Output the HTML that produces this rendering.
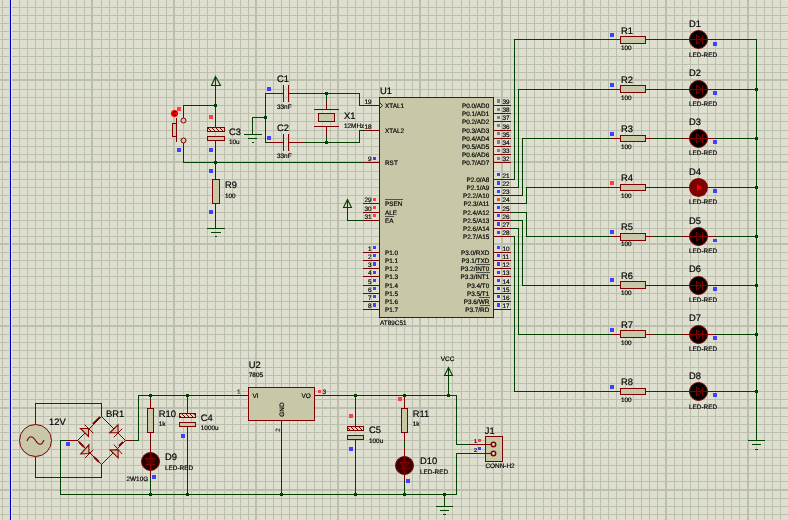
<!DOCTYPE html>
<html><head><meta charset="utf-8"><style>html,body{margin:0;padding:0;background:#dfdfd0;overflow:hidden}svg{display:block}</style></head>
<body><svg width="788" height="520" viewBox="0 0 788 520"><defs><pattern id="hatch" x="0" y="0" width="4" height="4" patternUnits="userSpaceOnUse">
<rect width="4" height="4" fill="#d8d8b8"/><rect x="0" y="0" width="1" height="1" fill="#800000"/><rect x="1" y="1" width="1" height="1" fill="#800000"/><rect x="2" y="2" width="1" height="1" fill="#800000"/><rect x="3" y="3" width="1" height="1" fill="#800000"/></pattern></defs><rect width="788" height="520" fill="#dfdfd0"/><g fill="#bdbfae" shape-rendering="crispEdges"><rect x="2" y="0" width="1" height="520"/><rect x="9" y="0" width="2" height="520"/><rect x="19" y="0" width="1" height="520"/><rect x="27" y="0" width="1" height="520"/><rect x="35" y="0" width="1" height="520"/><rect x="43" y="0" width="1" height="520"/><rect x="51" y="0" width="1" height="520"/><rect x="60" y="0" width="1" height="520"/><rect x="68" y="0" width="1" height="520"/><rect x="76" y="0" width="1" height="520"/><rect x="84" y="0" width="1" height="520"/><rect x="91" y="0" width="2" height="520"/><rect x="101" y="0" width="1" height="520"/><rect x="109" y="0" width="1" height="520"/><rect x="117" y="0" width="1" height="520"/><rect x="125" y="0" width="1" height="520"/><rect x="133" y="0" width="1" height="520"/><rect x="142" y="0" width="1" height="520"/><rect x="150" y="0" width="1" height="520"/><rect x="158" y="0" width="1" height="520"/><rect x="166" y="0" width="1" height="520"/><rect x="173" y="0" width="2" height="520"/><rect x="183" y="0" width="1" height="520"/><rect x="191" y="0" width="1" height="520"/><rect x="199" y="0" width="1" height="520"/><rect x="207" y="0" width="1" height="520"/><rect x="215" y="0" width="1" height="520"/><rect x="224" y="0" width="1" height="520"/><rect x="232" y="0" width="1" height="520"/><rect x="240" y="0" width="1" height="520"/><rect x="248" y="0" width="1" height="520"/><rect x="255" y="0" width="2" height="520"/><rect x="265" y="0" width="1" height="520"/><rect x="273" y="0" width="1" height="520"/><rect x="281" y="0" width="1" height="520"/><rect x="289" y="0" width="1" height="520"/><rect x="297" y="0" width="1" height="520"/><rect x="306" y="0" width="1" height="520"/><rect x="314" y="0" width="1" height="520"/><rect x="322" y="0" width="1" height="520"/><rect x="330" y="0" width="1" height="520"/><rect x="337" y="0" width="2" height="520"/><rect x="347" y="0" width="1" height="520"/><rect x="355" y="0" width="1" height="520"/><rect x="363" y="0" width="1" height="520"/><rect x="371" y="0" width="1" height="520"/><rect x="379" y="0" width="1" height="520"/><rect x="388" y="0" width="1" height="520"/><rect x="396" y="0" width="1" height="520"/><rect x="404" y="0" width="1" height="520"/><rect x="412" y="0" width="1" height="520"/><rect x="419" y="0" width="2" height="520"/><rect x="428" y="0" width="1" height="520"/><rect x="436" y="0" width="1" height="520"/><rect x="444" y="0" width="1" height="520"/><rect x="452" y="0" width="1" height="520"/><rect x="461" y="0" width="1" height="520"/><rect x="469" y="0" width="1" height="520"/><rect x="477" y="0" width="1" height="520"/><rect x="485" y="0" width="1" height="520"/><rect x="493" y="0" width="1" height="520"/><rect x="501" y="0" width="2" height="520"/><rect x="510" y="0" width="1" height="520"/><rect x="518" y="0" width="1" height="520"/><rect x="526" y="0" width="1" height="520"/><rect x="534" y="0" width="1" height="520"/><rect x="543" y="0" width="1" height="520"/><rect x="551" y="0" width="1" height="520"/><rect x="559" y="0" width="1" height="520"/><rect x="567" y="0" width="1" height="520"/><rect x="575" y="0" width="1" height="520"/><rect x="583" y="0" width="2" height="520"/><rect x="592" y="0" width="1" height="520"/><rect x="600" y="0" width="1" height="520"/><rect x="608" y="0" width="1" height="520"/><rect x="616" y="0" width="1" height="520"/><rect x="625" y="0" width="1" height="520"/><rect x="633" y="0" width="1" height="520"/><rect x="641" y="0" width="1" height="520"/><rect x="649" y="0" width="1" height="520"/><rect x="657" y="0" width="1" height="520"/><rect x="665" y="0" width="2" height="520"/><rect x="674" y="0" width="1" height="520"/><rect x="682" y="0" width="1" height="520"/><rect x="690" y="0" width="1" height="520"/><rect x="698" y="0" width="1" height="520"/><rect x="707" y="0" width="1" height="520"/><rect x="715" y="0" width="1" height="520"/><rect x="723" y="0" width="1" height="520"/><rect x="731" y="0" width="1" height="520"/><rect x="739" y="0" width="1" height="520"/><rect x="747" y="0" width="2" height="520"/><rect x="756" y="0" width="1" height="520"/><rect x="764" y="0" width="1" height="520"/><rect x="772" y="0" width="1" height="520"/><rect x="780" y="0" width="1" height="520"/><rect x="789" y="0" width="1" height="520"/><rect x="0" y="-3" width="788" height="2"/><rect x="0" y="7" width="788" height="1"/><rect x="0" y="15" width="788" height="1"/><rect x="0" y="23" width="788" height="1"/><rect x="0" y="31" width="788" height="1"/><rect x="0" y="39" width="788" height="1"/><rect x="0" y="48" width="788" height="1"/><rect x="0" y="56" width="788" height="1"/><rect x="0" y="64" width="788" height="1"/><rect x="0" y="72" width="788" height="1"/><rect x="0" y="79" width="788" height="2"/><rect x="0" y="89" width="788" height="1"/><rect x="0" y="97" width="788" height="1"/><rect x="0" y="105" width="788" height="1"/><rect x="0" y="113" width="788" height="1"/><rect x="0" y="121" width="788" height="1"/><rect x="0" y="130" width="788" height="1"/><rect x="0" y="138" width="788" height="1"/><rect x="0" y="146" width="788" height="1"/><rect x="0" y="154" width="788" height="1"/><rect x="0" y="161" width="788" height="2"/><rect x="0" y="171" width="788" height="1"/><rect x="0" y="179" width="788" height="1"/><rect x="0" y="187" width="788" height="1"/><rect x="0" y="195" width="788" height="1"/><rect x="0" y="203" width="788" height="1"/><rect x="0" y="212" width="788" height="1"/><rect x="0" y="220" width="788" height="1"/><rect x="0" y="228" width="788" height="1"/><rect x="0" y="236" width="788" height="1"/><rect x="0" y="243" width="788" height="2"/><rect x="0" y="252" width="788" height="1"/><rect x="0" y="260" width="788" height="1"/><rect x="0" y="268" width="788" height="1"/><rect x="0" y="276" width="788" height="1"/><rect x="0" y="285" width="788" height="1"/><rect x="0" y="293" width="788" height="1"/><rect x="0" y="301" width="788" height="1"/><rect x="0" y="309" width="788" height="1"/><rect x="0" y="317" width="788" height="1"/><rect x="0" y="325" width="788" height="2"/><rect x="0" y="334" width="788" height="1"/><rect x="0" y="342" width="788" height="1"/><rect x="0" y="350" width="788" height="1"/><rect x="0" y="358" width="788" height="1"/><rect x="0" y="367" width="788" height="1"/><rect x="0" y="375" width="788" height="1"/><rect x="0" y="383" width="788" height="1"/><rect x="0" y="391" width="788" height="1"/><rect x="0" y="399" width="788" height="1"/><rect x="0" y="407" width="788" height="2"/><rect x="0" y="416" width="788" height="1"/><rect x="0" y="424" width="788" height="1"/><rect x="0" y="432" width="788" height="1"/><rect x="0" y="440" width="788" height="1"/><rect x="0" y="449" width="788" height="1"/><rect x="0" y="457" width="788" height="1"/><rect x="0" y="465" width="788" height="1"/><rect x="0" y="473" width="788" height="1"/><rect x="0" y="481" width="788" height="1"/><rect x="0" y="489" width="788" height="2"/><rect x="0" y="498" width="788" height="1"/><rect x="0" y="506" width="788" height="1"/><rect x="0" y="514" width="788" height="1"/></g><rect x="9" y="0" width="1" height="520" fill="#d4d4b4"/><rect x="11" y="0" width="1" height="520" fill="#ececc8"/><rect x="10" y="0" width="1" height="520" fill="#0000c8"/><g shape-rendering="crispEdges"><rect x="215" y="86" width="1" height="32" fill="#004000"/><rect x="183" y="105" width="33" height="1" fill="#004000"/><rect x="183" y="105" width="1" height="5" fill="#004000"/><rect x="183" y="109" width="1" height="9" fill="#800000"/><rect x="183" y="143" width="1" height="8" fill="#800000"/><rect x="183" y="151" width="1" height="12" fill="#004000"/><rect x="176" y="118" width="1" height="24" fill="#800000"/><rect x="172.5" y="123.5" width="4" height="13" fill="#c8c8a8" stroke="#800000" stroke-width="1"/><rect x="177" y="107" width="4" height="4" fill="#ff4040"/><rect x="177" y="148" width="4" height="4" fill="#4040ff"/><rect x="215" y="118" width="1" height="9" fill="#800000"/><rect x="207.5" y="127.5" width="17" height="4" fill="url(#hatch)" stroke="#800000" stroke-width="1"/><rect x="207.5" y="136.5" width="17" height="4" fill="#c8c8a8" stroke="#800000" stroke-width="1"/><rect x="215" y="141" width="1" height="10" fill="#800000"/><rect x="215" y="151" width="1" height="12" fill="#004000"/><rect x="209" y="115" width="4" height="4" fill="#ff4040"/><rect x="209" y="148" width="4" height="4" fill="#4040ff"/><rect x="183" y="162" width="180" height="1" fill="#004000"/><rect x="363" y="162" width="16" height="1" fill="#800000"/><rect x="215" y="162" width="1" height="9" fill="#004000"/><rect x="215" y="171" width="1" height="8" fill="#800000"/><rect x="212.5" y="179.5" width="7" height="24" fill="#c8c8a8" stroke="#800000" stroke-width="1"/><rect x="215" y="204" width="1" height="8" fill="#800000"/><rect x="215" y="212" width="1" height="17" fill="#004000"/><rect x="207" y="228" width="18" height="1" fill="#004000"/><rect x="211" y="232" width="10" height="1" fill="#004000"/><rect x="215" y="236" width="2" height="1" fill="#004000"/><rect x="209" y="169" width="4" height="4" fill="#4040ff"/><rect x="209" y="210" width="4" height="4" fill="#4040ff"/><rect x="252" y="117" width="1" height="18" fill="#004000"/><rect x="252" y="117" width="14" height="1" fill="#004000"/><rect x="244" y="134" width="18" height="1" fill="#004000"/><rect x="248" y="138" width="9" height="1" fill="#004000"/><rect x="252" y="142" width="2" height="1" fill="#004000"/><rect x="265" y="93" width="1" height="50" fill="#004000"/><rect x="265" y="93" width="4" height="1" fill="#004000"/><rect x="269" y="93" width="15" height="1" fill="#800000"/><rect x="283" y="85" width="1" height="17" fill="#800000"/><rect x="288" y="85" width="1" height="17" fill="#800000"/><rect x="289" y="93" width="14" height="1" fill="#800000"/><rect x="303" y="93" width="57" height="1" fill="#004000"/><rect x="267" y="87" width="4" height="4" fill="#4040ff"/><rect x="265" y="142" width="4" height="1" fill="#004000"/><rect x="269" y="142" width="15" height="1" fill="#800000"/><rect x="283" y="134" width="1" height="17" fill="#800000"/><rect x="288" y="134" width="1" height="17" fill="#800000"/><rect x="289" y="142" width="14" height="1" fill="#800000"/><rect x="303" y="142" width="57" height="1" fill="#004000"/><rect x="267" y="136" width="4" height="4" fill="#4040ff"/><rect x="359" y="93" width="1" height="13" fill="#004000"/><rect x="359" y="105" width="4" height="1" fill="#004000"/><rect x="363" y="105" width="16" height="1" fill="#800000"/><rect x="359" y="130" width="1" height="13" fill="#004000"/><rect x="359" y="130" width="4" height="1" fill="#004000"/><rect x="363" y="130" width="16" height="1" fill="#800000"/><rect x="326" y="94" width="1" height="7" fill="#004000"/><rect x="326" y="101" width="1" height="8" fill="#800000"/><rect x="314" y="109" width="25" height="1" fill="#800000"/><rect x="318.5" y="113.5" width="16" height="8" fill="#c8c8a8" stroke="#800000" stroke-width="1"/><rect x="314" y="126" width="25" height="1" fill="#800000"/><rect x="326" y="127" width="1" height="9" fill="#800000"/><rect x="326" y="135" width="1" height="8" fill="#004000"/><rect x="379.5" y="97.5" width="114" height="220" fill="#c8c8a8" stroke="#800000" stroke-width="1"/><rect x="373" y="157" width="3" height="3" fill="#4040ff"/><rect x="363" y="203" width="16" height="1" fill="#800000"/><rect x="373" y="198" width="3" height="3" fill="#ff4040"/><rect x="363" y="212" width="16" height="1" fill="#800000"/><rect x="373" y="206" width="3" height="3" fill="#ff4040"/><rect x="373" y="214" width="3" height="3" fill="#ff4040"/><rect x="363" y="252" width="16" height="1" fill="#800000"/><rect x="373" y="246" width="3" height="3" fill="#4040ff"/><rect x="363" y="260" width="16" height="1" fill="#800000"/><rect x="373" y="254" width="3" height="3" fill="#4040ff"/><rect x="363" y="268" width="16" height="1" fill="#800000"/><rect x="373" y="262" width="3" height="4" fill="#4040ff"/><rect x="363" y="276" width="16" height="1" fill="#800000"/><rect x="373" y="271" width="3" height="3" fill="#4040ff"/><rect x="363" y="285" width="16" height="1" fill="#800000"/><rect x="373" y="279" width="3" height="3" fill="#4040ff"/><rect x="363" y="293" width="16" height="1" fill="#800000"/><rect x="373" y="287" width="3" height="3" fill="#4040ff"/><rect x="363" y="301" width="16" height="1" fill="#800000"/><rect x="373" y="295" width="3" height="3" fill="#4040ff"/><rect x="363" y="309" width="16" height="1" fill="#800000"/><rect x="373" y="303" width="3" height="4" fill="#4040ff"/><rect x="363" y="220" width="16" height="1" fill="#800000"/><rect x="385" y="199" width="18" height="1" fill="#505050"/><rect x="385" y="216" width="9" height="1" fill="#505050"/><rect x="476" y="264" width="14" height="1" fill="#505050"/><rect x="476" y="272" width="14" height="1" fill="#505050"/><rect x="479" y="297" width="11" height="1" fill="#505050"/><rect x="480" y="305" width="10" height="1" fill="#505050"/><rect x="347" y="207" width="1" height="14" fill="#004000"/><rect x="347" y="220" width="16" height="1" fill="#004000"/><rect x="494" y="105" width="17" height="1" fill="#800000"/><rect x="497" y="99" width="3" height="4" fill="#808080"/><rect x="494" y="113" width="17" height="1" fill="#800000"/><rect x="497" y="108" width="3" height="3" fill="#808080"/><rect x="494" y="121" width="17" height="1" fill="#800000"/><rect x="497" y="116" width="3" height="3" fill="#808080"/><rect x="494" y="130" width="17" height="1" fill="#800000"/><rect x="497" y="124" width="3" height="3" fill="#808080"/><rect x="494" y="138" width="17" height="1" fill="#800000"/><rect x="497" y="132" width="3" height="3" fill="#808080"/><rect x="494" y="146" width="17" height="1" fill="#800000"/><rect x="497" y="140" width="3" height="4" fill="#808080"/><rect x="494" y="154" width="17" height="1" fill="#800000"/><rect x="497" y="149" width="3" height="3" fill="#808080"/><rect x="494" y="162" width="17" height="1" fill="#800000"/><rect x="497" y="157" width="3" height="3" fill="#808080"/><rect x="494" y="179" width="17" height="1" fill="#800000"/><rect x="497" y="173" width="3" height="3" fill="#4040ff"/><rect x="494" y="187" width="17" height="1" fill="#800000"/><rect x="497" y="181" width="3" height="4" fill="#4040ff"/><rect x="494" y="195" width="17" height="1" fill="#800000"/><rect x="497" y="190" width="3" height="3" fill="#4040ff"/><rect x="494" y="203" width="17" height="1" fill="#800000"/><rect x="497" y="198" width="3" height="3" fill="#ff4040"/><rect x="494" y="212" width="17" height="1" fill="#800000"/><rect x="497" y="206" width="3" height="3" fill="#4040ff"/><rect x="494" y="220" width="17" height="1" fill="#800000"/><rect x="497" y="214" width="3" height="3" fill="#4040ff"/><rect x="494" y="228" width="17" height="1" fill="#800000"/><rect x="497" y="222" width="3" height="4" fill="#4040ff"/><rect x="494" y="236" width="17" height="1" fill="#800000"/><rect x="497" y="231" width="3" height="3" fill="#4040ff"/><rect x="494" y="252" width="17" height="1" fill="#800000"/><rect x="497" y="246" width="3" height="3" fill="#4040ff"/><rect x="494" y="260" width="17" height="1" fill="#800000"/><rect x="497" y="254" width="3" height="3" fill="#4040ff"/><rect x="494" y="268" width="17" height="1" fill="#800000"/><rect x="497" y="262" width="3" height="4" fill="#4040ff"/><rect x="494" y="276" width="17" height="1" fill="#800000"/><rect x="497" y="271" width="3" height="3" fill="#4040ff"/><rect x="494" y="285" width="17" height="1" fill="#800000"/><rect x="497" y="279" width="3" height="3" fill="#4040ff"/><rect x="494" y="293" width="17" height="1" fill="#800000"/><rect x="497" y="287" width="3" height="3" fill="#4040ff"/><rect x="494" y="301" width="17" height="1" fill="#800000"/><rect x="497" y="295" width="3" height="3" fill="#4040ff"/><rect x="494" y="309" width="17" height="1" fill="#800000"/><rect x="497" y="303" width="3" height="4" fill="#4040ff"/><rect x="511" y="179" width="4" height="1" fill="#004000"/><rect x="514" y="39" width="1" height="141" fill="#004000"/><rect x="514" y="39" width="98" height="1" fill="#004000"/><rect x="612" y="39" width="8" height="1" fill="#800000"/><rect x="620.5" y="36.5" width="25" height="7" fill="#c8c8a8" stroke="#800000" stroke-width="1"/><rect x="646" y="39" width="8" height="1" fill="#800000"/><rect x="654" y="39" width="28" height="1" fill="#004000"/><rect x="682" y="39" width="7" height="1" fill="#800000"/><rect x="708" y="39" width="8" height="1" fill="#800000"/><rect x="716" y="39" width="41" height="1" fill="#004000"/><rect x="610" y="33" width="4" height="4" fill="#4040ff"/><rect x="713" y="42" width="4" height="4" fill="#4040ff"/><rect x="511" y="187" width="8" height="1" fill="#004000"/><rect x="518" y="89" width="1" height="99" fill="#004000"/><rect x="518" y="89" width="94" height="1" fill="#004000"/><rect x="612" y="89" width="8" height="1" fill="#800000"/><rect x="620.5" y="85.5" width="25" height="7" fill="#c8c8a8" stroke="#800000" stroke-width="1"/><rect x="646" y="89" width="8" height="1" fill="#800000"/><rect x="654" y="89" width="28" height="1" fill="#004000"/><rect x="682" y="89" width="7" height="1" fill="#800000"/><rect x="708" y="89" width="8" height="1" fill="#800000"/><rect x="716" y="89" width="41" height="1" fill="#004000"/><rect x="610" y="83" width="4" height="4" fill="#4040ff"/><rect x="713" y="91" width="4" height="4" fill="#4040ff"/><rect x="511" y="195" width="12" height="1" fill="#004000"/><rect x="522" y="138" width="1" height="58" fill="#004000"/><rect x="522" y="138" width="90" height="1" fill="#004000"/><rect x="612" y="138" width="8" height="1" fill="#800000"/><rect x="620.5" y="135.5" width="25" height="6" fill="#c8c8a8" stroke="#800000" stroke-width="1"/><rect x="646" y="138" width="8" height="1" fill="#800000"/><rect x="654" y="138" width="28" height="1" fill="#004000"/><rect x="682" y="138" width="7" height="1" fill="#800000"/><rect x="708" y="138" width="8" height="1" fill="#800000"/><rect x="716" y="138" width="41" height="1" fill="#004000"/><rect x="610" y="132" width="4" height="4" fill="#4040ff"/><rect x="713" y="140" width="4" height="4" fill="#4040ff"/><rect x="511" y="203" width="16" height="1" fill="#004000"/><rect x="526" y="187" width="1" height="17" fill="#004000"/><rect x="526" y="187" width="86" height="1" fill="#004000"/><rect x="612" y="187" width="8" height="1" fill="#800000"/><rect x="620.5" y="184.5" width="25" height="6" fill="#c8c8a8" stroke="#800000" stroke-width="1"/><rect x="646" y="187" width="8" height="1" fill="#800000"/><rect x="654" y="187" width="28" height="1" fill="#004000"/><rect x="682" y="187" width="7" height="1" fill="#800000"/><rect x="708" y="187" width="8" height="1" fill="#800000"/><rect x="716" y="187" width="41" height="1" fill="#004000"/><rect x="610" y="181" width="4" height="4" fill="#ff4040"/><rect x="713" y="189" width="4" height="4" fill="#4040ff"/><rect x="511" y="212" width="16" height="1" fill="#004000"/><rect x="526" y="212" width="1" height="25" fill="#004000"/><rect x="526" y="236" width="86" height="1" fill="#004000"/><rect x="612" y="236" width="8" height="1" fill="#800000"/><rect x="620.5" y="233.5" width="25" height="7" fill="#c8c8a8" stroke="#800000" stroke-width="1"/><rect x="646" y="236" width="8" height="1" fill="#800000"/><rect x="654" y="236" width="28" height="1" fill="#004000"/><rect x="682" y="236" width="7" height="1" fill="#800000"/><rect x="708" y="236" width="8" height="1" fill="#800000"/><rect x="716" y="236" width="41" height="1" fill="#004000"/><rect x="610" y="230" width="4" height="4" fill="#4040ff"/><rect x="713" y="239" width="4" height="3" fill="#4040ff"/><rect x="511" y="220" width="12" height="1" fill="#004000"/><rect x="522" y="220" width="1" height="66" fill="#004000"/><rect x="522" y="285" width="90" height="1" fill="#004000"/><rect x="612" y="285" width="8" height="1" fill="#800000"/><rect x="620.5" y="281.5" width="25" height="7" fill="#c8c8a8" stroke="#800000" stroke-width="1"/><rect x="646" y="285" width="8" height="1" fill="#800000"/><rect x="654" y="285" width="28" height="1" fill="#004000"/><rect x="682" y="285" width="7" height="1" fill="#800000"/><rect x="708" y="285" width="8" height="1" fill="#800000"/><rect x="716" y="285" width="41" height="1" fill="#004000"/><rect x="610" y="278" width="4" height="4" fill="#4040ff"/><rect x="713" y="287" width="4" height="4" fill="#4040ff"/><rect x="511" y="228" width="8" height="1" fill="#004000"/><rect x="518" y="228" width="1" height="107" fill="#004000"/><rect x="518" y="334" width="94" height="1" fill="#004000"/><rect x="612" y="334" width="8" height="1" fill="#800000"/><rect x="620.5" y="330.5" width="25" height="7" fill="#c8c8a8" stroke="#800000" stroke-width="1"/><rect x="646" y="334" width="8" height="1" fill="#800000"/><rect x="654" y="334" width="28" height="1" fill="#004000"/><rect x="682" y="334" width="7" height="1" fill="#800000"/><rect x="708" y="334" width="8" height="1" fill="#800000"/><rect x="716" y="334" width="41" height="1" fill="#004000"/><rect x="610" y="328" width="4" height="4" fill="#4040ff"/><rect x="713" y="336" width="4" height="4" fill="#4040ff"/><rect x="511" y="236" width="4" height="1" fill="#004000"/><rect x="514" y="236" width="1" height="156" fill="#004000"/><rect x="514" y="391" width="98" height="1" fill="#004000"/><rect x="612" y="391" width="8" height="1" fill="#800000"/><rect x="620.5" y="388.5" width="25" height="6" fill="#c8c8a8" stroke="#800000" stroke-width="1"/><rect x="646" y="391" width="8" height="1" fill="#800000"/><rect x="654" y="391" width="28" height="1" fill="#004000"/><rect x="682" y="391" width="7" height="1" fill="#800000"/><rect x="708" y="391" width="8" height="1" fill="#800000"/><rect x="716" y="391" width="41" height="1" fill="#004000"/><rect x="610" y="385" width="4" height="4" fill="#4040ff"/><rect x="713" y="393" width="4" height="4" fill="#4040ff"/><rect x="756" y="39" width="1" height="402" fill="#004000"/><rect x="748" y="440" width="17" height="1" fill="#004000"/><rect x="752" y="444" width="9" height="1" fill="#004000"/><rect x="755" y="449" width="3" height="1" fill="#004000"/><rect x="35" y="403" width="1" height="13" fill="#004000"/><rect x="35" y="403" width="67" height="1" fill="#004000"/><rect x="101" y="403" width="1" height="5" fill="#004000"/><rect x="101" y="408" width="1" height="9" fill="#800000"/><rect x="35" y="416" width="1" height="9" fill="#800000"/><rect x="35" y="440" width="1" height="1" fill="#ff2020"/><rect x="35" y="457" width="1" height="9" fill="#800000"/><rect x="35" y="466" width="1" height="12" fill="#004000"/><rect x="35" y="477" width="67" height="1" fill="#004000"/><rect x="101" y="474" width="1" height="4" fill="#004000"/><rect x="101" y="465" width="1" height="9" fill="#800000"/><rect x="60" y="440" width="1" height="55" fill="#004000"/><rect x="60" y="440" width="8" height="1" fill="#004000"/><rect x="68" y="440" width="9" height="1" fill="#800000"/><rect x="66" y="442" width="4" height="4" fill="#4040ff"/><rect x="126" y="440" width="8" height="1" fill="#800000"/><rect x="134" y="440" width="5" height="1" fill="#004000"/><rect x="138" y="395" width="1" height="46" fill="#004000"/><rect x="138" y="395" width="94" height="1" fill="#004000"/><rect x="150" y="396" width="1" height="3" fill="#004000"/><rect x="150" y="399" width="1" height="9" fill="#800000"/><rect x="147.5" y="408.5" width="6" height="24" fill="#c8c8a8" stroke="#800000" stroke-width="1"/><rect x="150" y="433" width="1" height="20" fill="#800000"/><rect x="150" y="441" width="1" height="3" fill="#004000"/><rect x="150" y="471" width="1" height="7" fill="#800000"/><rect x="150" y="478" width="1" height="17" fill="#004000"/><rect x="152" y="475" width="4" height="4" fill="#4040ff"/><rect x="187" y="396" width="1" height="6" fill="#004000"/><rect x="187" y="402" width="1" height="11" fill="#800000"/><rect x="179.5" y="413.5" width="16" height="4" fill="url(#hatch)" stroke="#800000" stroke-width="1"/><rect x="179.5" y="422.5" width="16" height="4" fill="#c8c8a8" stroke="#800000" stroke-width="1"/><rect x="187" y="427" width="1" height="10" fill="#800000"/><rect x="187" y="437" width="1" height="58" fill="#004000"/><rect x="181" y="434" width="4" height="4" fill="#4040ff"/><rect x="60" y="494" width="397" height="1" fill="#004000"/><rect x="456" y="453" width="1" height="42" fill="#004000"/><rect x="456" y="453" width="13" height="1" fill="#004000"/><rect x="232" y="395" width="16" height="1" fill="#800000"/><rect x="248.5" y="387.5" width="66" height="33" fill="#c8c8a8" stroke="#800000" stroke-width="1"/><rect x="315" y="395" width="12" height="1" fill="#800000"/><rect x="281" y="421" width="1" height="16" fill="#800000"/><rect x="281" y="437" width="1" height="58" fill="#004000"/><rect x="318" y="390" width="3" height="3" fill="#ff4040"/><rect x="327" y="395" width="130" height="1" fill="#004000"/><rect x="456" y="395" width="1" height="50" fill="#004000"/><rect x="456" y="444" width="13" height="1" fill="#004000"/><rect x="448" y="375" width="1" height="21" fill="#004000"/><rect x="355" y="396" width="1" height="20" fill="#004000"/><rect x="355" y="416" width="1" height="10" fill="#800000"/><rect x="347.5" y="426.5" width="16" height="4" fill="url(#hatch)" stroke="#800000" stroke-width="1"/><rect x="347.5" y="435.5" width="16" height="4" fill="#c8c8a8" stroke="#800000" stroke-width="1"/><rect x="355" y="440" width="1" height="9" fill="#800000"/><rect x="355" y="449" width="1" height="46" fill="#004000"/><rect x="349" y="414" width="4" height="4" fill="#ff4040"/><rect x="349" y="447" width="4" height="4" fill="#4040ff"/><rect x="404" y="396" width="1" height="12" fill="#800000"/><rect x="401.5" y="408.5" width="6" height="24" fill="#c8c8a8" stroke="#800000" stroke-width="1"/><rect x="404" y="433" width="1" height="8" fill="#800000"/><rect x="404" y="441" width="1" height="7" fill="#004000"/><rect x="404" y="448" width="1" height="9" fill="#800000"/><rect x="404" y="475" width="1" height="7" fill="#800000"/><rect x="404" y="482" width="1" height="13" fill="#004000"/><rect x="398" y="397" width="4" height="4" fill="#ff4040"/><rect x="406" y="479" width="4" height="4" fill="#4040ff"/><rect x="444" y="494" width="1" height="13" fill="#004000"/><rect x="436" y="506" width="17" height="1" fill="#004000"/><rect x="440" y="510" width="9" height="1" fill="#004000"/><rect x="443" y="514" width="3" height="1" fill="#004000"/><rect x="485.5" y="436.5" width="17" height="25" fill="#c8c8a8" stroke="#800000" stroke-width="1"/><rect x="469" y="444" width="23" height="1" fill="#800000"/><rect x="469" y="453" width="23" height="1" fill="#800000"/><rect x="478" y="439" width="3" height="3" fill="#ff4040"/><rect x="478" y="447" width="3" height="3" fill="#4040ff"/></g><g><path d="M215.5 76.5 L220.5 85.5 L211.5 85.5 Z M215.5 76.5 V86" fill="none" stroke="#004000" stroke-width="1.1"/><path d="M214 104h3v3h-3z " fill="#004000" fill-opacity="1" shape-rendering="crispEdges"/><circle cx="183.5" cy="120.5" r="2.5" fill="#c8c8a8" stroke="#800000"/><circle cx="183.5" cy="140.5" r="2.5" fill="#c8c8a8" stroke="#800000"/><circle cx="174.5" cy="113.5" r="3.6" fill="#ff0000"/><path d="M176.3 112 A1.9 1.9 0 1 0 176.3 115" fill="none" stroke="#300000" stroke-width="1.1"/><path d="M214 161h3v3h-3z " fill="#004000" fill-opacity="1" shape-rendering="crispEdges"/><path d="M264 116h3v3h-3z " fill="#004000" fill-opacity="1" shape-rendering="crispEdges"/><path d="M325 92h3v3h-3z " fill="#004000" fill-opacity="1" shape-rendering="crispEdges"/><path d="M325 141h3v3h-3z " fill="#004000" fill-opacity="1" shape-rendering="crispEdges"/><path d="M379.5 102.5 L382.5 105.5 L379.5 108.5" stroke="#800000" fill="none" stroke-width="1"/><path d="M347.5 199.5 L351.5 207.5 L343.5 207.5 Z M347.5 199.5 V208" fill="none" stroke="#004000" stroke-width="1.1"/><circle cx="698.5" cy="39.5" r="9" fill="#000000" stroke="#800000" stroke-width="1"/><path d="M689 39.5 H708 M696.5 35.0 V44.0 L702.5 39.5 Z M702.5 35.0 V44.5" fill="none" stroke="#800000" stroke-width="1"/><circle cx="698.5" cy="89.5" r="9" fill="#000000" stroke="#800000" stroke-width="1"/><path d="M689 89.5 H708 M696.5 85.0 V94.0 L702.5 89.5 Z M702.5 85.0 V94.5" fill="none" stroke="#800000" stroke-width="1"/><path d="M755 88h3v3h-3z " fill="#004000" fill-opacity="1" shape-rendering="crispEdges"/><circle cx="698.5" cy="138.5" r="9" fill="#000000" stroke="#800000" stroke-width="1"/><path d="M689 138.5 H708 M696.5 134.0 V143.0 L702.5 138.5 Z M702.5 134.0 V143.5" fill="none" stroke="#800000" stroke-width="1"/><path d="M755 137h3v3h-3z " fill="#004000" fill-opacity="1" shape-rendering="crispEdges"/><circle cx="698.5" cy="187.5" r="9.5" fill="#800000"/><path d="M697.0 184.0 L702.0 187.5 L697.0 191.0 Z" fill="#ff0000"/><path d="M755 186h3v3h-3z " fill="#004000" fill-opacity="1" shape-rendering="crispEdges"/><circle cx="698.5" cy="236.5" r="9" fill="#000000" stroke="#800000" stroke-width="1"/><path d="M689 236.5 H708 M696.5 232.0 V241.0 L702.5 236.5 Z M702.5 232.0 V241.5" fill="none" stroke="#800000" stroke-width="1"/><path d="M755 235h3v3h-3z " fill="#004000" fill-opacity="1" shape-rendering="crispEdges"/><circle cx="698.5" cy="285.5" r="9" fill="#000000" stroke="#800000" stroke-width="1"/><path d="M689 285.5 H708 M696.5 281.0 V290.0 L702.5 285.5 Z M702.5 281.0 V290.5" fill="none" stroke="#800000" stroke-width="1"/><path d="M755 284h3v3h-3z " fill="#004000" fill-opacity="1" shape-rendering="crispEdges"/><circle cx="698.5" cy="334.5" r="9" fill="#000000" stroke="#800000" stroke-width="1"/><path d="M689 334.5 H708 M696.5 330.0 V339.0 L702.5 334.5 Z M702.5 330.0 V339.5" fill="none" stroke="#800000" stroke-width="1"/><path d="M755 333h3v3h-3z " fill="#004000" fill-opacity="1" shape-rendering="crispEdges"/><circle cx="698.5" cy="391.5" r="9" fill="#000000" stroke="#800000" stroke-width="1"/><path d="M689 391.5 H708 M696.5 387.0 V396.0 L702.5 391.5 Z M702.5 387.0 V396.5" fill="none" stroke="#800000" stroke-width="1"/><path d="M755 390h3v3h-3z " fill="#004000" fill-opacity="1" shape-rendering="crispEdges"/><circle cx="35.5" cy="440.5" r="16" fill="#c8c8a8" stroke="#800000" stroke-width="1"/><path d="M27 441 C29 436 32 435 35.5 440.5 C39 446 42 445 44 440" fill="none" stroke="#800000" stroke-width="1.1"/><path d="M77.5 440.5 L101.5 416.5 L125.5 440.5 L101.5 464.5 Z" fill="none" stroke="#800000" stroke-width="1" shape-rendering="crispEdges"/><path d="M93 424 L100 417 M79 442 L84 447 M94 457 L99 462 M119 446 L123 442" fill="none" stroke="#800000" stroke-width="1.8"/><path d="M88.5 428.5 L80.5 428.5 L88.5 436.5 Z" fill="#c8c8a8" stroke="#800000" stroke-width="1.1"/><path d="M118.0 432.8 L109.8 432.8 L118.0 424.9 Z" fill="#c8c8a8" stroke="#800000" stroke-width="1.1"/><path d="M88.9 453.5 L80.8 453.8 L88.9 444.8 Z" fill="#c8c8a8" stroke="#800000" stroke-width="1.1"/><path d="M118.1 449.8 L110.0 450.0 L118.1 457.8 Z" fill="#c8c8a8" stroke="#800000" stroke-width="1.1"/><path d="M84.6 424.6 L93.3 433.25" stroke="#800000" stroke-width="1"/><path d="M113.8 437.3 L122.2 428.7" stroke="#800000" stroke-width="1"/><path d="M84.9 458.1 L93.25 449.75" stroke="#800000" stroke-width="1"/><path d="M113.8 444.5 L122.2 454.1" stroke="#800000" stroke-width="1"/><path d="M149 394h3v3h-3z " fill="#004000" fill-opacity="1" shape-rendering="crispEdges"/><path d="M186 394h3v3h-3z " fill="#004000" fill-opacity="1" shape-rendering="crispEdges"/><circle cx="150.5" cy="461.5" r="9" fill="#280000" stroke="#800000" stroke-width="1"/><path d="M145.5 458.5 H155.5 L150.5 464.5 Z" fill="#500000" stroke="#800000" stroke-width="1"/><path d="M150.5 452 V458.5 M150.5 464.5 V471 M145.5 464.5 H155.5" fill="none" stroke="#800000" stroke-width="1"/><path d="M149 493h3v3h-3z " fill="#004000" fill-opacity="1" shape-rendering="crispEdges"/><path d="M186 493h3v3h-3z " fill="#004000" fill-opacity="1" shape-rendering="crispEdges"/><path d="M280 493h3v3h-3z " fill="#004000" fill-opacity="1" shape-rendering="crispEdges"/><path d="M354 394h3v3h-3z " fill="#004000" fill-opacity="1" shape-rendering="crispEdges"/><path d="M403 394h3v3h-3z " fill="#004000" fill-opacity="1" shape-rendering="crispEdges"/><path d="M447 394h3v3h-3z " fill="#004000" fill-opacity="1" shape-rendering="crispEdges"/><path d="M448.5 367.5 L452.5 375.5 L444.5 375.5 Z M448.5 367.5 V376" fill="none" stroke="#004000" stroke-width="1.1"/><path d="M354 493h3v3h-3z " fill="#004000" fill-opacity="1" shape-rendering="crispEdges"/><circle cx="404.5" cy="465.5" r="9" fill="#3c0000" stroke="#800000" stroke-width="1"/><path d="M399.5 462.5 H409.5 L404.5 468.5 Z" fill="#600000" stroke="#800000" stroke-width="1"/><path d="M404.5 456 V462.5 M404.5 468.5 V475 M399.5 468.5 H409.5" fill="none" stroke="#800000" stroke-width="1"/><path d="M403 493h3v3h-3z " fill="#004000" fill-opacity="1" shape-rendering="crispEdges"/><path d="M443 493h3v3h-3z " fill="#004000" fill-opacity="1" shape-rendering="crispEdges"/><circle cx="493.5" cy="444.5" r="2.2" fill="#dcdcc8" stroke="#800000" stroke-width="1.5"/><circle cx="493.5" cy="453.5" r="2.2" fill="#dcdcc8" stroke="#800000" stroke-width="1.5"/></g><g font-family="Liberation Sans, sans-serif" fill="#000000" stroke="#000000" stroke-width="0.18" style="filter:grayscale(1);text-rendering:geometricPrecision"><text x="229" y="135" font-size="9.4" text-anchor="start" >C3</text><text x="229" y="144" font-size="6.4" text-anchor="start" >10u</text><text x="225" y="188" font-size="9.4" text-anchor="start" >R9</text><text x="225" y="198" font-size="6.4" text-anchor="start" >100</text><text x="277" y="82" font-size="9.4" text-anchor="start" >C1</text><text x="277" y="109" font-size="6.4" text-anchor="start" >33nF</text><text x="277" y="131" font-size="9.4" text-anchor="start" >C2</text><text x="277" y="158" font-size="6.4" text-anchor="start" >33nF</text><text x="344" y="119" font-size="9.4" text-anchor="start" >X1</text><text x="344" y="128" font-size="6.4" text-anchor="start" >12MHz</text><text x="380" y="94" font-size="9.4" text-anchor="start" >U1</text><text x="380" y="325" font-size="6.4" text-anchor="start" >AT89C51</text><text x="371.5" y="104" font-size="6.4" text-anchor="end" >19</text><text x="385" y="107.7" font-size="6.4" text-anchor="start" >XTAL1</text><text x="371.5" y="129" font-size="6.4" text-anchor="end" >18</text><text x="385" y="132.7" font-size="6.4" text-anchor="start" >XTAL2</text><text x="371.5" y="161" font-size="6.4" text-anchor="end" >9</text><text x="385" y="164.7" font-size="6.4" text-anchor="start" >RST</text><text x="371.5" y="202" font-size="6.4" text-anchor="end" >29</text><text x="385" y="205.7" font-size="6.4" text-anchor="start" >PSEN</text><text x="371.5" y="211" font-size="6.4" text-anchor="end" >30</text><text x="385" y="214.7" font-size="6.4" text-anchor="start" >ALE</text><text x="371.5" y="219" font-size="6.4" text-anchor="end" >31</text><text x="385" y="222.7" font-size="6.4" text-anchor="start" >EA</text><text x="371.5" y="251" font-size="6.4" text-anchor="end" >1</text><text x="385" y="254.7" font-size="6.4" text-anchor="start" >P1.0</text><text x="371.5" y="259" font-size="6.4" text-anchor="end" >2</text><text x="385" y="262.7" font-size="6.4" text-anchor="start" >P1.1</text><text x="371.5" y="267" font-size="6.4" text-anchor="end" >3</text><text x="385" y="270.7" font-size="6.4" text-anchor="start" >P1.2</text><text x="371.5" y="275" font-size="6.4" text-anchor="end" >4</text><text x="385" y="278.7" font-size="6.4" text-anchor="start" >P1.3</text><text x="371.5" y="284" font-size="6.4" text-anchor="end" >5</text><text x="385" y="287.7" font-size="6.4" text-anchor="start" >P1.4</text><text x="371.5" y="292" font-size="6.4" text-anchor="end" >6</text><text x="385" y="295.7" font-size="6.4" text-anchor="start" >P1.5</text><text x="371.5" y="300" font-size="6.4" text-anchor="end" >7</text><text x="385" y="303.7" font-size="6.4" text-anchor="start" >P1.6</text><text x="371.5" y="308" font-size="6.4" text-anchor="end" >8</text><text x="385" y="311.7" font-size="6.4" text-anchor="start" >P1.7</text><text x="502.5" y="104" font-size="6.4" text-anchor="start" >39</text><text x="489.3" y="107.7" font-size="6.4" text-anchor="end" >P0.0/AD0</text><text x="502.5" y="112" font-size="6.4" text-anchor="start" >38</text><text x="489.3" y="115.7" font-size="6.4" text-anchor="end" >P0.1/AD1</text><text x="502.5" y="120" font-size="6.4" text-anchor="start" >37</text><text x="489.3" y="123.7" font-size="6.4" text-anchor="end" >P0.2/AD2</text><text x="502.5" y="129" font-size="6.4" text-anchor="start" >36</text><text x="489.3" y="132.7" font-size="6.4" text-anchor="end" >P0.3/AD3</text><text x="502.5" y="137" font-size="6.4" text-anchor="start" >35</text><text x="489.3" y="140.7" font-size="6.4" text-anchor="end" >P0.4/AD4</text><text x="502.5" y="145" font-size="6.4" text-anchor="start" >34</text><text x="489.3" y="148.7" font-size="6.4" text-anchor="end" >P0.5/AD5</text><text x="502.5" y="153" font-size="6.4" text-anchor="start" >33</text><text x="489.3" y="156.7" font-size="6.4" text-anchor="end" >P0.6/AD6</text><text x="502.5" y="161" font-size="6.4" text-anchor="start" >32</text><text x="489.3" y="164.7" font-size="6.4" text-anchor="end" >P0.7/AD7</text><text x="502.5" y="178" font-size="6.4" text-anchor="start" >21</text><text x="489.3" y="181.7" font-size="6.4" text-anchor="end" >P2.0/A8</text><text x="502.5" y="186" font-size="6.4" text-anchor="start" >22</text><text x="489.3" y="189.7" font-size="6.4" text-anchor="end" >P2.1/A9</text><text x="502.5" y="194" font-size="6.4" text-anchor="start" >23</text><text x="489.3" y="197.7" font-size="6.4" text-anchor="end" >P2.2/A10</text><text x="502.5" y="202" font-size="6.4" text-anchor="start" >24</text><text x="489.3" y="205.7" font-size="6.4" text-anchor="end" >P2.3/A11</text><text x="502.5" y="211" font-size="6.4" text-anchor="start" >25</text><text x="489.3" y="214.7" font-size="6.4" text-anchor="end" >P2.4/A12</text><text x="502.5" y="219" font-size="6.4" text-anchor="start" >26</text><text x="489.3" y="222.7" font-size="6.4" text-anchor="end" >P2.5/A13</text><text x="502.5" y="227" font-size="6.4" text-anchor="start" >27</text><text x="489.3" y="230.7" font-size="6.4" text-anchor="end" >P2.6/A14</text><text x="502.5" y="235" font-size="6.4" text-anchor="start" >28</text><text x="489.3" y="238.7" font-size="6.4" text-anchor="end" >P2.7/A15</text><text x="502.5" y="251" font-size="6.4" text-anchor="start" >10</text><text x="489.3" y="254.7" font-size="6.4" text-anchor="end" >P3.0/RXD</text><text x="502.5" y="259" font-size="6.4" text-anchor="start" >11</text><text x="489.3" y="262.7" font-size="6.4" text-anchor="end" >P3.1/TXD</text><text x="502.5" y="267" font-size="6.4" text-anchor="start" >12</text><text x="489.3" y="270.7" font-size="6.4" text-anchor="end" >P3.2/INT0</text><text x="502.5" y="275" font-size="6.4" text-anchor="start" >13</text><text x="489.3" y="278.7" font-size="6.4" text-anchor="end" >P3.3/INT1</text><text x="502.5" y="284" font-size="6.4" text-anchor="start" >14</text><text x="489.3" y="287.7" font-size="6.4" text-anchor="end" >P3.4/T0</text><text x="502.5" y="292" font-size="6.4" text-anchor="start" >15</text><text x="489.3" y="295.7" font-size="6.4" text-anchor="end" >P3.5/T1</text><text x="502.5" y="300" font-size="6.4" text-anchor="start" >16</text><text x="489.3" y="303.7" font-size="6.4" text-anchor="end" >P3.6/WR</text><text x="502.5" y="308" font-size="6.4" text-anchor="start" >17</text><text x="489.3" y="311.7" font-size="6.4" text-anchor="end" >P3.7/RD</text><text x="621" y="34" font-size="9.4" text-anchor="start" >R1</text><text x="621" y="50" font-size="6.4" text-anchor="start" >100</text><text x="689" y="27" font-size="9.4" text-anchor="start" >D1</text><text x="689" y="57" font-size="6.4" text-anchor="start" >LED-RED</text><text x="621" y="83" font-size="9.4" text-anchor="start" >R2</text><text x="621" y="100" font-size="6.4" text-anchor="start" >100</text><text x="689" y="76" font-size="9.4" text-anchor="start" >D2</text><text x="689" y="106" font-size="6.4" text-anchor="start" >LED-RED</text><text x="621" y="132" font-size="9.4" text-anchor="start" >R3</text><text x="621" y="149" font-size="6.4" text-anchor="start" >100</text><text x="689" y="125" font-size="9.4" text-anchor="start" >D3</text><text x="689" y="155" font-size="6.4" text-anchor="start" >LED-RED</text><text x="621" y="181" font-size="9.4" text-anchor="start" >R4</text><text x="621" y="198" font-size="6.4" text-anchor="start" >100</text><text x="689" y="175" font-size="9.4" text-anchor="start" >D4</text><text x="689" y="204" font-size="6.4" text-anchor="start" >LED-RED</text><text x="621" y="230" font-size="9.4" text-anchor="start" >R5</text><text x="621" y="246" font-size="6.4" text-anchor="start" >100</text><text x="689" y="224" font-size="9.4" text-anchor="start" >D5</text><text x="689" y="253" font-size="6.4" text-anchor="start" >LED-RED</text><text x="621" y="279" font-size="9.4" text-anchor="start" >R6</text><text x="621" y="295" font-size="6.4" text-anchor="start" >100</text><text x="689" y="272" font-size="9.4" text-anchor="start" >D6</text><text x="689" y="302" font-size="6.4" text-anchor="start" >LED-RED</text><text x="621" y="328" font-size="9.4" text-anchor="start" >R7</text><text x="621" y="345" font-size="6.4" text-anchor="start" >100</text><text x="689" y="321" font-size="9.4" text-anchor="start" >D7</text><text x="689" y="351" font-size="6.4" text-anchor="start" >LED-RED</text><text x="621" y="385" font-size="9.4" text-anchor="start" >R8</text><text x="621" y="402" font-size="6.4" text-anchor="start" >100</text><text x="689" y="379" font-size="9.4" text-anchor="start" >D8</text><text x="689" y="409" font-size="6.4" text-anchor="start" >LED-RED</text><text x="49" y="425" font-size="9.4" text-anchor="start" >12V</text><text x="106" y="417" font-size="9.4" text-anchor="start" >BR1</text><text x="126.5" y="481" font-size="6.4" text-anchor="start" >2W10G</text><text x="158.8" y="417" font-size="9.4" text-anchor="start" >R10</text><text x="158.8" y="426" font-size="6.4" text-anchor="start" >1k</text><text x="165" y="460" font-size="9.4" text-anchor="start" >D9</text><text x="165" y="470" font-size="6.4" text-anchor="start" >LED-RED</text><text x="200.8" y="421" font-size="9.4" text-anchor="start" >C4</text><text x="200.8" y="430" font-size="6.4" text-anchor="start" >1000u</text><text x="248.8" y="368" font-size="9.4" text-anchor="start" >U2</text><text x="248.8" y="377" font-size="6.4" text-anchor="start" >7805</text><text x="240.5" y="393.5" font-size="6.4" text-anchor="end" fill="#606060">1</text><text x="252.5" y="398" font-size="6.4" text-anchor="start" >VI</text><text x="310.7" y="398" font-size="6.4" text-anchor="end" >VO</text><text transform="translate(283.8,409.6) rotate(-90)" font-size="6.4" text-anchor="middle">GND</text><text transform="translate(279.5,430) rotate(-90)" font-size="6.4" text-anchor="middle" fill="#404040">2</text><text x="322.5" y="394" font-size="6.4" text-anchor="start" >3</text><text x="447.6" y="361" font-size="6.4" text-anchor="middle" >VCC</text><text x="369" y="433" font-size="9.4" text-anchor="start" >C5</text><text x="369" y="443" font-size="6.4" text-anchor="start" >100u</text><text x="412.7" y="417" font-size="9.4" text-anchor="start" >R11</text><text x="412.7" y="426" font-size="6.4" text-anchor="start" >1k</text><text x="420" y="464" font-size="9.4" text-anchor="start" >D10</text><text x="420" y="474" font-size="6.4" text-anchor="start" >LED-RED</text><text x="477" y="443" font-size="5.5" text-anchor="end" >1</text><text x="477" y="452" font-size="5.5" text-anchor="end" >2</text><text x="484.8" y="434" font-size="9.4" text-anchor="start" >J1</text><text x="485.5" y="468" font-size="6.4" text-anchor="start" >CONN-H2</text></g></svg></body></html>
